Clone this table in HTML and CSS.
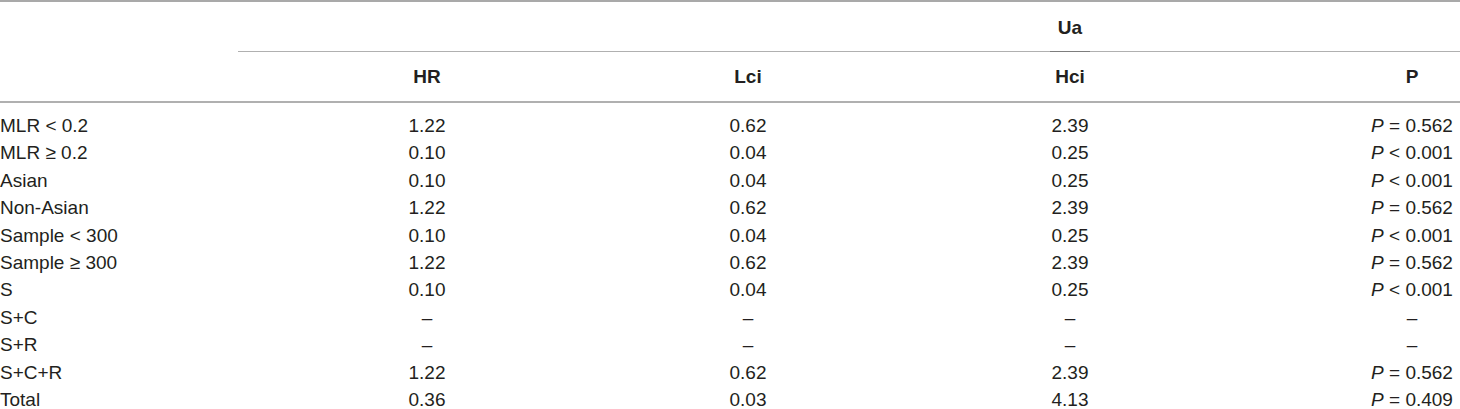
FILE: index.html
```html
<!DOCTYPE html>
<html>
<head>
<meta charset="utf-8">
<link rel="stylesheet" href="styles.css">
</head>
<body>
<div class="table">
  <div class="head1">
    <div class="cell blank"></div>
    <div class="cell span"><div class="group"><span class="group-label">Ua</span></div></div>
  </div>
  <div class="head2">
    <div class="cell"></div>
    <div class="cell c">HR</div>
    <div class="cell c">Lci</div>
    <div class="cell c">Hci</div>
    <div class="cell"></div>
    <div class="cell c">P</div>
  </div>
  <div class="body">
    <div class="row"><div class="lab">MLR &lt; 0.2</div><div class="c">1.22</div><div class="c">0.62</div><div class="c">2.39</div><div></div><div class="c"><i>P</i> = 0.562</div></div>
    <div class="row"><div class="lab">MLR ≥ 0.2</div><div class="c">0.10</div><div class="c">0.04</div><div class="c">0.25</div><div></div><div class="c"><i>P</i> &lt; 0.001</div></div>
    <div class="row"><div class="lab">Asian</div><div class="c">0.10</div><div class="c">0.04</div><div class="c">0.25</div><div></div><div class="c"><i>P</i> &lt; 0.001</div></div>
    <div class="row"><div class="lab">Non-Asian</div><div class="c">1.22</div><div class="c">0.62</div><div class="c">2.39</div><div></div><div class="c"><i>P</i> = 0.562</div></div>
    <div class="row"><div class="lab">Sample &lt; 300</div><div class="c">0.10</div><div class="c">0.04</div><div class="c">0.25</div><div></div><div class="c"><i>P</i> &lt; 0.001</div></div>
    <div class="row"><div class="lab">Sample ≥ 300</div><div class="c">1.22</div><div class="c">0.62</div><div class="c">2.39</div><div></div><div class="c"><i>P</i> = 0.562</div></div>
    <div class="row"><div class="lab">S</div><div class="c">0.10</div><div class="c">0.04</div><div class="c">0.25</div><div></div><div class="c"><i>P</i> &lt; 0.001</div></div>
    <div class="row"><div class="lab">S+C</div><div class="c">–</div><div class="c">–</div><div class="c">–</div><div></div><div class="c">–</div></div>
    <div class="row"><div class="lab">S+R</div><div class="c">–</div><div class="c">–</div><div class="c">–</div><div></div><div class="c">–</div></div>
    <div class="row"><div class="lab">S+C+R</div><div class="c">1.22</div><div class="c">0.62</div><div class="c">2.39</div><div></div><div class="c"><i>P</i> = 0.562</div></div>
    <div class="row"><div class="lab">Total</div><div class="c">0.36</div><div class="c">0.03</div><div class="c">4.13</div><div></div><div class="c"><i>P</i> = 0.409</div></div>
  </div>
</div>
</body>
</html>
```
FILE: styles.css
```css
html, body {
  margin: 0;
  padding: 0;
  background: #ffffff;
}
body {
  font-family: "Liberation Sans", Arial, sans-serif;
  font-size: 19px;
  color: #231f20;
  width: 1460px;
}
.table {
  border-top: 2px solid #a9a9a9;
}
.head1 {
  display: grid;
  grid-template-columns: 238px 1fr;
  height: 50px;
}
.head1 .span {
  border-bottom: 1px solid #b0b0b0;
  display: grid;
  grid-template-columns: 378px 264px 380px 104px 96px;
}
.group {
  grid-column: 3;
  display: flex;
  justify-content: center;
  align-items: stretch;
}
.group-label {
  width: 40px;
  text-align: center;
  font-weight: bold;
  display: flex;
  align-items: center;
  justify-content: center;
  padding-top: 2px;
  border-bottom: 1px solid #7d7d7d;
  margin-bottom: -1px;
}
.head2 {
  display: grid;
  grid-template-columns: 238px 378px 264px 380px 104px 96px;
  height: 49px;
  align-items: center;
  font-weight: bold;
  border-bottom: 2px solid #b0b0b0;
}
.c {
  text-align: center;
}
.body {
  padding-top: 9px;
}
.row {
  display: grid;
  grid-template-columns: 238px 378px 264px 380px 104px 96px;
  height: 27.4px;
  line-height: 27.4px;
}
.lab {
  white-space: nowrap;
}
i {
  font-style: italic;
}
```
